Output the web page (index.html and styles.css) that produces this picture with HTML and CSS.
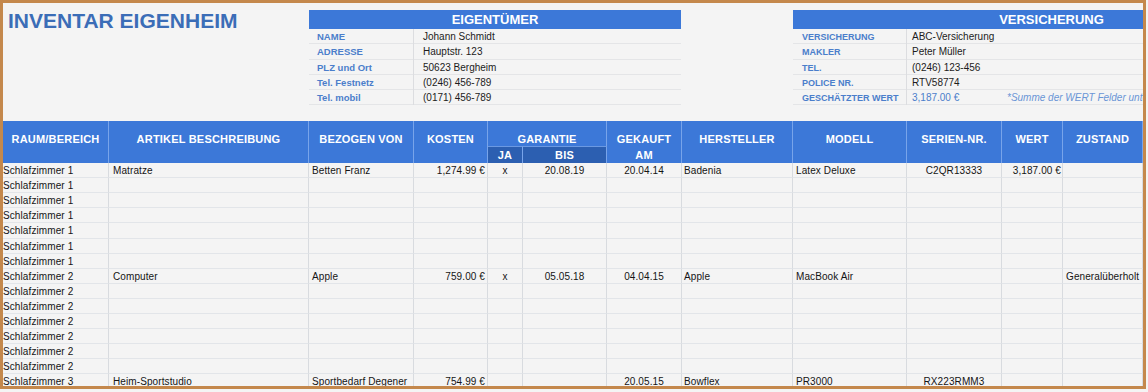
FILE: index.html
```html
<!DOCTYPE html>
<html lang="de">
<head>
<meta charset="utf-8">
<title>Inventar Eigenheim</title>
<link rel="stylesheet" href="styles.css">
</head>
<body>
<div class="frame">
  <div class="top">
    <div class="title-area"><h1 class="title">INVENTAR EIGENHEIM</h1></div>
    <section class="info owner">
      <div class="info-head">EIGENTÜMER</div>
      <div class="info-row"><span class="lbl">NAME</span><span class="val">Johann Schmidt</span></div>
      <div class="info-row"><span class="lbl">ADRESSE</span><span class="val">Hauptstr. 123</span></div>
      <div class="info-row"><span class="lbl">PLZ und Ort</span><span class="val">50623 Bergheim</span></div>
      <div class="info-row"><span class="lbl">Tel. Festnetz</span><span class="val">(0246) 456-789</span></div>
      <div class="info-row"><span class="lbl">Tel. mobil</span><span class="val">(0171) 456-789</span></div>
    </section>
    <div class="gap"></div>
    <section class="info insurance">
      <div class="info-head">VERSICHERUNG</div>
      <div class="info-row"><span class="lbl">VERSICHERUNG</span><span class="val">ABC-Versicherung</span></div>
      <div class="info-row"><span class="lbl">MAKLER</span><span class="val">Peter Müller</span></div>
      <div class="info-row"><span class="lbl">TEL.</span><span class="val">(0246) 123-456</span></div>
      <div class="info-row"><span class="lbl">POLICE NR.</span><span class="val">RTV58774</span></div>
      <div class="info-row"><span class="lbl">GESCHÄTZTER WERT</span><span class="val"><span class="amount">3,187.00 €</span><em class="note">*Summe der WERT Felder unten</em></span></div>
    </section>
  </div>

  <div class="sheet">
    <div class="h">RAUM/BEREICH</div>
    <div class="h">ARTIKEL BESCHREIBUNG</div>
    <div class="h">BEZOGEN VON</div>
    <div class="h">KOSTEN</div>
    <div class="h group">GARANTIE</div>
    <div class="h">GEKAUFT<br>AM</div>
    <div class="h">HERSTELLER</div>
    <div class="h">MODELL</div>
    <div class="h">SERIEN-NR.</div>
    <div class="h">WERT</div>
    <div class="h">ZUSTAND</div>
    <div class="h sub ja">JA</div>
    <div class="h sub bis">BIS</div>

    <div class="row"><div>Schlafzimmer 1</div><div>Matratze</div><div>Betten Franz</div><div>1,274.99 €</div><div>x</div><div>20.08.19</div><div>20.04.14</div><div>Badenia</div><div>Latex Deluxe</div><div>C2QR13333</div><div>3,187.00 €</div><div></div></div>
    <div class="row"><div>Schlafzimmer 1</div><div></div><div></div><div></div><div></div><div></div><div></div><div></div><div></div><div></div><div></div><div></div></div>
    <div class="row"><div>Schlafzimmer 1</div><div></div><div></div><div></div><div></div><div></div><div></div><div></div><div></div><div></div><div></div><div></div></div>
    <div class="row"><div>Schlafzimmer 1</div><div></div><div></div><div></div><div></div><div></div><div></div><div></div><div></div><div></div><div></div><div></div></div>
    <div class="row"><div>Schlafzimmer 1</div><div></div><div></div><div></div><div></div><div></div><div></div><div></div><div></div><div></div><div></div><div></div></div>
    <div class="row"><div>Schlafzimmer 1</div><div></div><div></div><div></div><div></div><div></div><div></div><div></div><div></div><div></div><div></div><div></div></div>
    <div class="row"><div>Schlafzimmer 1</div><div></div><div></div><div></div><div></div><div></div><div></div><div></div><div></div><div></div><div></div><div></div></div>
    <div class="row"><div>Schlafzimmer 2</div><div>Computer</div><div>Apple</div><div>759.00 €</div><div>x</div><div>05.05.18</div><div>04.04.15</div><div>Apple</div><div>MacBook Air</div><div></div><div></div><div>Generalüberholt</div></div>
    <div class="row"><div>Schlafzimmer 2</div><div></div><div></div><div></div><div></div><div></div><div></div><div></div><div></div><div></div><div></div><div></div></div>
    <div class="row"><div>Schlafzimmer 2</div><div></div><div></div><div></div><div></div><div></div><div></div><div></div><div></div><div></div><div></div><div></div></div>
    <div class="row"><div>Schlafzimmer 2</div><div></div><div></div><div></div><div></div><div></div><div></div><div></div><div></div><div></div><div></div><div></div></div>
    <div class="row"><div>Schlafzimmer 2</div><div></div><div></div><div></div><div></div><div></div><div></div><div></div><div></div><div></div><div></div><div></div></div>
    <div class="row"><div>Schlafzimmer 2</div><div></div><div></div><div></div><div></div><div></div><div></div><div></div><div></div><div></div><div></div><div></div></div>
    <div class="row"><div>Schlafzimmer 2</div><div></div><div></div><div></div><div></div><div></div><div></div><div></div><div></div><div></div><div></div><div></div></div>
    <div class="row"><div>Schlafzimmer 3</div><div>Heim-Sportstudio</div><div>Sportbedarf Degener</div><div>754.99 €</div><div></div><div></div><div>20.05.15</div><div>Bowflex</div><div>PR3000</div><div>RX223RMM3</div><div></div><div></div></div>
  </div>
</div>
</body>
</html>
```

FILE: styles.css
```css
* { box-sizing: border-box; }

html, body {
  margin: 0;
  background: #f4f4f4;
}

body {
  font-family: "Liberation Sans", Arial, sans-serif;
  color: #161616;
}

.frame {
  width: 1146px;
  height: 389px;
  border: 3px solid #c4884c;
  overflow: hidden;
  background: #f4f4f4;
}

/* ---------- top area ---------- */
.top {
  display: flex;
  height: 118px;
  padding-top: 7px;
}

.title-area {
  flex: 0 0 306px;
  padding-left: 5px;
}

.title {
  margin: 0;
  font-size: 21px;
  line-height: 21px;
  font-weight: bold;
  color: #3b6db7;
  white-space: nowrap;
}

.info { flex: 0 0 auto; }
.owner { width: 372px; }
.gap { flex: 0 0 112px; }
.insurance { width: 517px; }

.info-head {
  height: 19px;
  background: #3c78d8;
  color: #fff;
  font-weight: bold;
  font-size: 13px;
  line-height: 20px;
  text-align: center;
}

.info-row {
  display: grid;
  grid-template-columns: 105px 1fr;
  height: 15.3px;
  border-bottom: 1px solid #e4e5e7;
}

.insurance .info-row { grid-template-columns: 114px 1fr; }

.lbl {
  padding: 1px 0 0 8px;
  font-size: 9.5px;
  line-height: 14.3px;
  font-weight: bold;
  color: #4b7ecb;
  border-right: 1px solid #dcdde0;
  white-space: nowrap;
}

.insurance .lbl {
  padding-left: 9px;
  font-size: 9px;
}

.val {
  padding: 1px 0 0 9px;
  font-size: 10px;
  line-height: 14.3px;
  color: #1c1c1c;
  white-space: nowrap;
}

.insurance .val { padding-left: 5px; }

.amount {
  display: inline-block;
  width: 95px;
  color: #4b7ecb;
}

.note {
  color: #6a95d6;
  font-size: 10px;
}

/* ---------- sheet ---------- */
.sheet {
  display: grid;
  grid-template-columns: 106px 200px 105px 74px 35px 84px 75px 111px 114px 95px 61px 80px;
  grid-template-rows: 25px 17.3px repeat(15, 15.05px);
  font-size: 10px;
}

.h {
  grid-row: span 2;
  background: #3c78d8;
  color: #fff;
  font-weight: bold;
  font-size: 11px;
  letter-spacing: 0.2px;
  line-height: 16px;
  text-align: center;
  padding-top: 10px;
  border-right: 1px solid #78a4ea;
  white-space: nowrap;
}

.h.group {
  grid-row: 1;
  grid-column: 5 / span 2;
}

.h.sub {
  grid-row: 2;
  padding-top: 0;
  line-height: 17px;
  background: #2c5fb1;
  border-top: 1px solid #6b99e2;
}

.h.ja { grid-column: 5; }
.h.bis { grid-column: 6; }

.row { display: contents; }

.row > div {
  padding: 1px 3px 0;
  line-height: 14px;
  white-space: nowrap;
  color: #151515;
  letter-spacing: 0.1px;
  border-right: 1px solid #d8dbdf;
  border-bottom: 1px solid #e2e5e9;
}

.row > div:nth-child(1) { padding-left: 0; }
.row > div:nth-child(2) { padding-left: 4px; }
.row > div:nth-child(4) { text-align: right; padding-right: 2px; }
.row > div:nth-child(5),
.row > div:nth-child(6),
.row > div:nth-child(7),
.row > div:nth-child(10) { text-align: center; }
.row > div:nth-child(8) { padding-left: 2px; }
.row > div:nth-child(11) { text-align: right; padding-right: 1px; }
```
